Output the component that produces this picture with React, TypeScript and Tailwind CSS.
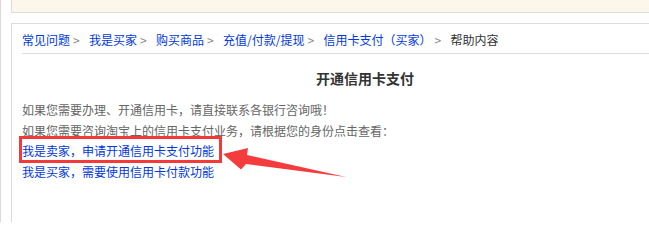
const crumbs = ['常见问题', '我是买家', '购买商品', '充值/付款/提现', '信用卡支付（买家）'];

const Sep = () => (
  <span className="inline-block w-[19px] pl-[3px] text-[#888]">&gt;</span>
);

const App = () => {
  return (
    <div className="relative w-[649px] h-[222px] overflow-hidden bg-white border-l border-[#d9d9d9] font-['Noto_Sans_CJK_SC','Noto_Sans',sans-serif] text-[12px]">
      <div className="pl-[10px] w-[720px]">
        <div className="h-[13px] border-l border-b border-[#dcdcdc] bg-[#fdf6ea]" />
        <div className="mt-[10px] h-[300px] border-l border-t border-[#dcdcdc] px-[10px]">
          <div className="w-[686px]">
            {/* breadcrumb */}
            <div className="pt-[4px] pb-[1px] leading-[24px] border-b border-[#dcdcdc] whitespace-nowrap">
              {crumbs.map((c) => (
                <span key={c}>
                  <a href="#" className="text-[#0038e0]">{c}</a>
                  <Sep />
                </span>
              ))}
              <span className="text-[#333]">帮助内容</span>
            </div>

            <h1 className="mt-[14px] text-center text-[14px] leading-[20px] font-bold text-[#333]">
              开通信用卡支付
            </h1>

            <div className="mt-[12px] leading-[20.6px] text-[#666] whitespace-nowrap">
              <p>如果您需要办理、开通信用卡，请直接联系各银行咨询哦！</p>
              <p>如果您需要咨询淘宝上的信用卡支付业务，请根据您的身份点击查看：</p>
              <p>
                <a href="#" className="text-[#0038e0]">我是卖家，申请开通信用卡支付功能</a>
              </p>
              <p>
                <a href="#" className="text-[#0038e0]">我是买家，需要使用信用卡付款功能</a>
              </p>
            </div>
          </div>
        </div>
      </div>

      {/* annotation: highlight box + arrow */}
      <div className="pointer-events-none absolute left-[18px] top-[136px] w-[203px] h-[27px] border-[3px] border-[#f23a3a]" />
      <svg
        className="pointer-events-none absolute left-0 top-0"
        width="649"
        height="222"
        viewBox="0 0 649 222"
      >
        <polygon
          points="222,154 247,148 246,155 345,177 245,164 240,169.5"
          fill="#f43c3c"
        />
      </svg>
    </div>
  );
};

export default App;
